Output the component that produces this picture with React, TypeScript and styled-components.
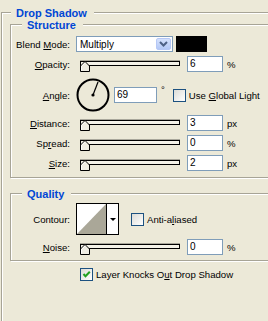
import React from 'react';
import styled, { createGlobalStyle } from 'styled-components';

const GlobalStyle = createGlobalStyle`
  html, body {
    margin: 0;
    background: #ece9d8;
    overflow: hidden;
  }
`;

const Panel = styled.div`
  width: 268px;
  height: 321px;
  overflow: hidden;
  box-sizing: border-box;
  padding: 12px 0 0 1px;
  font-family: 'Liberation Sans', Arial, sans-serif;
  font-size: 9.6px;
  color: #000;
`;

// etched group frame; top edge is drawn by the header rules, runs off the right edge
const Group = styled.section<{ $width: number; $minHeight?: number; $top?: number }>`
  display: flex;
  flex-direction: column;
  margin-top: ${(p) => p.$top ?? 0}px;
  width: ${(p) => p.$width}px;
  min-height: ${(p) => p.$minHeight ?? 0}px;
  box-sizing: border-box;
  border: 1px solid #a7a496;
  border-top: none;
  box-shadow: inset 1px 0 0 #fff, 1px 1px 0 #fff;
`;

const Header = styled.div`
  display: flex;
  align-items: center;
  height: 12px;
  margin-top: -5px;
`;

const Rule = styled.div<{ $w?: number }>`
  flex: ${(p) => (p.$w ? `0 0 ${p.$w}px` : '1')};
  height: 2px;
  box-sizing: border-box;
  border-top: 1px solid #a7a496;
  border-bottom: 1px solid #fff;
`;

const Title = styled.span`
  padding: 0 7px 0 5px;
  font-weight: bold;
  font-size: 11px;
  line-height: 12px;
  color: #0046d5;
  white-space: nowrap;
`;

const Body = styled.div<{ $pad: string }>`
  display: flex;
  flex-direction: column;
  padding: ${(p) => p.$pad};
`;

const Row = styled.div<{ $h: number; $top: number; $indent?: number }>`
  display: flex;
  align-items: center;
  height: ${(p) => p.$h}px;
  margin-top: ${(p) => p.$top}px;
  margin-left: ${(p) => p.$indent ?? 0}px;
`;

const Label = styled.span`
  flex: none;
  width: 59px;
  margin-right: 6px;
  text-align: right;
  white-space: nowrap;
`;

const Key = styled.span`
  text-decoration: underline;
`;

const Select = styled.div`
  display: flex;
  align-items: center;
  justify-content: space-between;
  width: 97px;
  height: 16px;
  box-sizing: border-box;
  border: 1px solid #7f9db9;
  background: #fff;
  padding: 0 1px 0 3px;
  font-size: 10px;
`;

const DropButton = styled.div`
  width: 15px;
  height: 12px;
  box-sizing: border-box;
  border: 1px solid #b6c8f6;
  border-radius: 2px;
  background: linear-gradient(#d5e1fc, #b3c8f6);
  display: flex;
  align-items: center;
  justify-content: center;
`;

const Swatch = styled.div`
  width: 31px;
  height: 16px;
  margin-left: 3px;
  background: #000;
`;

const Slider = styled.div`
  position: relative;
  flex: none;
  width: 104px;
  height: 16px;
  margin-right: 7px;
`;

const Track = styled.div`
  margin: 5px 0 0 4px;
  width: 100px;
  height: 5px;
  box-sizing: border-box;
  border: 1px solid #000;
  background: #f4f2e8;
  box-shadow: 0 -1px 0 #a9a79b;
`;

const Thumb = styled.svg`
  position: absolute;
  left: 4px;
  top: 5px;
`;

const Field = styled.div<{ $w: number }>`
  flex: none;
  width: ${(p) => p.$w}px;
  height: 16px;
  box-sizing: border-box;
  border: 1px solid #7f9db9;
  background: #fff;
  padding-left: 2px;
  line-height: 14px;
  font-size: 10px;
`;

const Unit = styled.span<{ $raise?: boolean }>`
  margin-left: 4px;
  align-self: ${(p) => (p.$raise ? 'flex-start' : 'center')};
  margin-top: ${(p) => (p.$raise ? 6 : 0)}px;
`;

const Dial = styled.svg`
  flex: none;
  margin-right: 4px;
`;

const Check = styled.div<{ $gap: number }>`
  flex: none;
  width: 13px;
  height: 13px;
  box-sizing: border-box;
  margin-left: ${(p) => p.$gap}px;
  margin-right: 3px;
  border: 1px solid #1c5180;
  background: linear-gradient(135deg, #dcdcd7, #ffffff);
  display: flex;
  align-items: center;
  justify-content: center;
`;

const ContourBox = styled.div`
  display: flex;
  flex: none;
  width: 43px;
  height: 32px;
  box-sizing: border-box;
  border: 1px solid #000;
  background: #fff;
`;

const ContourPreview = styled.svg`
  display: block;
  border-right: 1px solid #000;
`;

const ContourArrow = styled.div`
  flex: 1;
  display: flex;
  align-items: center;
  justify-content: center;

  &::after {
    content: '';
    border-top: 3px solid #000;
    border-left: 3px solid transparent;
    border-right: 3px solid transparent;
  }
`;

const GroupHeader = ({ title, lead }: { title: string; lead: number }) => (
  <Header>
    <Rule $w={lead} />
    <Title>{title}</Title>
    <Rule />
  </Header>
);

const SliderControl = () => (
  <Slider>
    <Track />
    <Thumb width="10" height="11" viewBox="0 0 10 11">
      <path d="M0.5 10.5 V5 L5 0.5 L9.5 5 V10.5 Z" fill="#efede3" stroke="#000" />
      <path d="M1.5 9.5 V5.4 L5 1.9" fill="none" stroke="#fff" />
    </Thumb>
  </Slider>
);

const angle = 69;
const rad = (angle * Math.PI) / 180;

const SliderRow = ({ label, value, unit, top }: { label: React.ReactNode; value: string; unit: string; top: number }) => (
  <Row $h={16} $top={top}>
    <Label>{label}</Label>
    <SliderControl />
    <Field $w={36}>{value}</Field>
    <Unit>{unit}</Unit>
  </Row>
);

const CheckMark = () => (
  <svg width="9" height="9" viewBox="0 0 9 9">
    <path d="M1.5 4 L3.5 6.3 L7.8 1.8" fill="none" stroke="#21a121" strokeWidth="2" />
  </svg>
);

const App = () => (
  <Panel>
    <GlobalStyle />
    <Group $width={300} $minHeight={340}>
      <GroupHeader title="Drop Shadow" lead={9} />
      <Body $pad="0 0 0 8px">
        <Group $width={290} $top={5}>
          <GroupHeader title="Structure" lead={11} />
          <Body $pad="0 0 6px 0">
            <Row $h={16} $top={5}>
              <Label>Blend <Key>M</Key>ode:</Label>
              <Select>
                <span>Multiply</span>
                <DropButton>
                  <svg width="9" height="6" viewBox="0 0 9 6">
                    <path d="M1 1 L4.5 4.5 L8 1" fill="none" stroke="#4d6185" strokeWidth="2" />
                  </svg>
                </DropButton>
              </Select>
              <Swatch />
            </Row>
            <SliderRow label={<><Key>O</Key>pacity:</>} value="6" unit="%" top={4} />
            <Row $h={34} $top={6}>
              <Label><Key>A</Key>ngle:</Label>
              <Dial width="34" height="34" viewBox="0 0 34 34">
                <circle cx="17" cy="17" r="15.5" fill="none" stroke="#000" strokeWidth="2" />
                <line x1="17" y1="17" x2={17 + 14 * Math.cos(rad)} y2={17 - 14 * Math.sin(rad)} stroke="#000" strokeWidth="1.2" />
                <circle cx="17" cy="17" r="1.6" fill="#000" />
              </Dial>
              <Field $w={43}>{angle}</Field>
              <Unit $raise>°</Unit>
              <Check $gap={8} />
              <span>Use <Key>G</Key>lobal Light</span>
            </Row>
            <SliderRow label={<><Key>D</Key>istance:</>} value="3" unit="px" top={3} />
            <SliderRow label={<>Sp<Key>r</Key>ead:</>} value="0" unit="%" top={4} />
            <SliderRow label={<><Key>S</Key>ize:</>} value="2" unit="px" top={4} />
          </Body>
        </Group>
        <Group $width={290} $top={15}>
          <GroupHeader title="Quality" lead={11} />
          <Body $pad="0 0 5px 0">
            <Row $h={32} $top={3}>
              <Label>Contour:</Label>
              <ContourBox>
                <ContourPreview width="29" height="30" viewBox="0 0 29 30">
                  <polygon points="0,30 29,0 29,30" fill="#aaa798" />
                </ContourPreview>
                <ContourArrow />
              </ContourBox>
              <Check $gap={12} />
              <span>Anti-a<Key>l</Key>iased</span>
            </Row>
            <SliderRow label={<><Key>N</Key>oise:</>} value="0" unit="%" top={4} />
          </Body>
        </Group>
        <Row $h={13} $top={7} $indent={70}>
          <Check $gap={0}>
            <CheckMark />
          </Check>
          <span>Layer Knocks O<Key>u</Key>t Drop Shadow</span>
        </Row>
      </Body>
    </Group>
  </Panel>
);

export default App;
